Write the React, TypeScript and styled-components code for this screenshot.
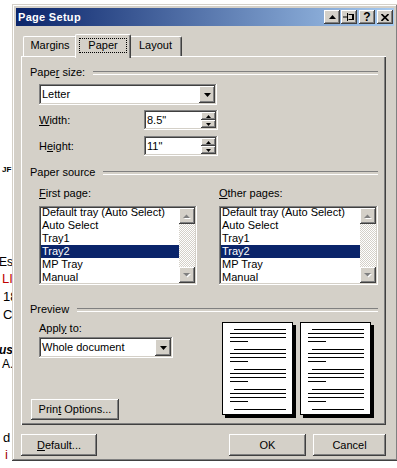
import styled, { createGlobalStyle } from "styled-components";

const GlobalStyle = createGlobalStyle`
  html, body {
    margin: 0;
    padding: 0;
    background: #fff;
  }
  body {
    font-family: "Liberation Sans", Arial, sans-serif;
    font-size: 11px;
    color: #000;
  }
  * {
    box-sizing: border-box;
  }
`;

const face = "#d4d0c8";
const raised = `box-shadow: inset -1px -1px #404040, inset 1px 1px #ffffff, inset -2px -2px #808080, inset 2px 2px ${face};`;
const sunken = `box-shadow: inset -1px -1px #ffffff, inset 1px 1px #808080, inset -2px -2px ${face}, inset 2px 2px #404040;`;

const Screen = styled.div`
  position: relative;
  width: 397px;
  height: 468px;
  overflow: hidden;
  background: #fff;
`;

/* strip of the document that peeks out left of the dialog */
const Doc = styled.div`
  width: 12px;
  overflow: hidden;
  display: flex;
  flex-direction: column;
`;

const DocLine = styled.div<{
  $gap: number;
  $left?: number;
  $size?: number;
  $color?: string;
  $bold?: boolean;
  $italic?: boolean;
}>`
  margin-top: ${(p) => p.$gap}px;
  margin-left: ${(p) => p.$left ?? 3}px;
  height: 14px;
  line-height: 14px;
  font-size: ${(p) => p.$size ?? 13}px;
  color: ${(p) => p.$color ?? "#000"};
  font-weight: ${(p) => (p.$bold ? "bold" : "normal")};
  font-style: ${(p) => (p.$italic ? "italic" : "normal")};
  white-space: nowrap;
`;

/* the dialog window floats over the document */
const Window = styled.div`
  position: absolute;
  left: 12px;
  top: 4px;
  width: 386px;
  height: 457px;
  padding: 4px;
  background: ${face};
  box-shadow: inset -1px -1px #404040, inset 1px 1px ${face}, inset -2px -2px #808080, inset 2px 2px #ffffff;
  display: flex;
  flex-direction: column;
`;

const TitleBar = styled.div`
  height: 18px;
  display: flex;
  align-items: center;
  padding: 0 1px 0 2px;
  background: linear-gradient(to right, #0a246a, #a6caf0);
  color: #fff;
`;

const TitleText = styled.span`
  flex: 1;
  font-weight: bold;
  font-size: 11px;
  letter-spacing: 0.3px;
`;

const CaptionButton = styled.div<{ $gap?: number }>`
  width: 16px;
  height: 14px;
  margin-left: ${(p) => p.$gap ?? 0}px;
  background: ${face};
  ${raised}
  display: flex;
  align-items: center;
  justify-content: center;
  color: #000;
  font-weight: bold;
  font-size: 12px;
  line-height: 14px;
`;

const Body = styled.div`
  flex: 1;
  display: flex;
  flex-direction: column;
  padding: 8px 8px 0 5px;
`;

const TabStrip = styled.div`
  display: flex;
  align-items: flex-end;
  height: 22px;
  padding-left: 2px;
`;

const Tab = styled.div<{ $active?: boolean; $w: number }>`
  position: relative;
  z-index: ${(p) => (p.$active ? 1 : 0)};
  width: ${(p) => p.$w + (p.$active ? 4 : 0)}px;
  height: ${(p) => (p.$active ? 24 : 20)}px;
  margin: ${(p) => (p.$active ? "0 -2px -2px" : "0")};
  padding-top: ${(p) => (p.$active ? 3 : 2)}px;
  background: ${face};
  border-top: 1px solid #fff;
  border-left: 1px solid #fff;
  border-right: 1px solid #404040;
  border-radius: 2px 2px 0 0;
  box-shadow: inset -1px 0 #808080;
  display: flex;
  justify-content: center;
  align-items: flex-start;
  line-height: 13px;
`;

const FocusLabel = styled.span`
  border: 1px dotted #000;
  padding: 0 8px;
  line-height: 13px;
`;

const TabPanel = styled.div`
  height: 369px;
  padding: 10px 8px 5px 9px;
  box-shadow: inset 1px 1px #fff, inset -1px -1px #404040, inset -2px -2px #808080;
  display: flex;
  flex-direction: column;
`;

const GroupHeader = styled.div<{ $mt?: number }>`
  margin-top: ${(p) => p.$mt ?? 0}px;
  height: 13px;
  line-height: 13px;
  display: flex;
  align-items: center;
  gap: 8px;

  &::after {
    content: "";
    flex: 1;
    height: 2px;
    border-top: 1px solid #808080;
    border-bottom: 1px solid #fff;
  }
`;

const Indent = styled.div<{ $mt?: number }>`
  margin-left: 9px;
  margin-top: ${(p) => p.$mt ?? 0}px;
`;

const Mn = styled.span`
  text-decoration: underline;
`;

const Combo = styled.div<{ $w: number }>`
  width: ${(p) => p.$w}px;
  height: 21px;
  padding: 2px;
  background: #fff;
  ${sunken}
  display: flex;
  align-items: center;
`;

const ComboText = styled.span`
  flex: 1;
  padding-left: 1px;
  line-height: 17px;
`;

const DropButton = styled.div`
  width: 16px;
  height: 17px;
  background: ${face};
  ${raised}
  display: flex;
  align-items: center;
  justify-content: center;
`;

const FieldRow = styled.div<{ $mt: number }>`
  margin-top: ${(p) => p.$mt}px;
  height: 20px;
  display: flex;
  align-items: center;
`;

const FieldLabel = styled.span`
  width: 105px;
  line-height: 13px;
`;

const Spin = styled.div`
  width: 74px;
  height: 20px;
  padding: 2px;
  background: #fff;
  ${sunken}
  display: flex;
`;

const SpinValue = styled.span`
  flex: 1;
  line-height: 16px;
  padding-left: 1px;
`;

const SpinButtons = styled.div`
  width: 15px;
  display: flex;
  flex-direction: column;
`;

const SpinButton = styled.div`
  flex: 1;
  background: ${face};
  ${raised}
  display: flex;
  align-items: center;
  justify-content: center;
`;

const SourceGrid = styled.div`
  margin-top: 8px;
  margin-left: 9px;
  display: grid;
  grid-template-columns: 180px 159px;
`;

const SourceColumn = styled.div`
  display: flex;
  flex-direction: column;
  gap: 6px;
  line-height: 13px;
`;

const ListBox = styled.div<{ $w: number }>`
  width: ${(p) => p.$w}px;
  height: 79px;
  padding: 2px;
  background: #fff;
  ${sunken}
  display: flex;
  overflow: hidden;
`;

const ListItems = styled.div`
  flex: 1;
  margin-top: -2px;
  overflow: hidden;
`;

const ListItem = styled.div<{ $selected?: boolean }>`
  height: 13px;
  line-height: 13px;
  padding-left: 1px;
  white-space: nowrap;
  background: ${(p) => (p.$selected ? "#0a246a" : "transparent")};
  color: ${(p) => (p.$selected ? "#fff" : "#000")};
`;

const ScrollBar = styled.div`
  width: 16px;
  display: flex;
  flex-direction: column;
  justify-content: space-between;
  background: repeating-conic-gradient(#ffffff 0 25%, ${face} 0 50%) 0 0 / 2px 2px;
`;

const ScrollButton = styled.div`
  width: 16px;
  height: 16px;
  background: ${face};
  ${raised}
  display: flex;
  align-items: center;
  justify-content: center;
`;

const PreviewRow = styled.div`
  margin-top: 6px;
  flex: 1;
  display: flex;
`;

const PreviewLeft = styled.div`
  flex: 1;
  display: flex;
  flex-direction: column;
`;

const ApplyLabel = styled.div`
  margin-left: 9px;
  line-height: 13px;
`;

const Button = styled.div<{ $w: number; $gap?: number }>`
  width: ${(p) => p.$w}px;
  height: 22px;
  margin-left: ${(p) => p.$gap ?? 0}px;
  background: ${face};
  ${raised}
  display: flex;
  align-items: center;
  justify-content: center;
  line-height: 13px;
`;

const PrintOptions = styled(Button)`
  margin-top: auto;
  margin-left: 1px;
  height: 21px;
`;

const Pages = styled.div`
  display: flex;
  gap: 7px;
  margin-right: 7px;
  align-self: flex-start;
`;

const Sheet = styled.div`
  width: 71px;
  height: 93px;
  background: #fff;
  border: 1px solid #000;
  box-shadow: 3px 3px 0 #000;

  svg {
    display: block;
  }
`;

const ButtonRow = styled.div`
  margin-top: 9px;
  display: flex;
  align-items: center;
`;

const Spacer = styled.div`
  flex: 1;
`;

const DownTri = () => (
  <svg width="7" height="4" viewBox="0 0 7 4">
    <path d="M0 0h7L3.5 4z" fill="#000" />
  </svg>
);

const SmallTri = ({ up }: { up?: boolean }) => (
  <svg width="5" height="3" viewBox="0 0 5 3">
    <path d={up ? "M0 3h5L2.5 0z" : "M0 0h5L2.5 3z"} fill="#000" />
  </svg>
);

const GrayTri = ({ up }: { up?: boolean }) => (
  <svg width="8" height="5" viewBox="0 0 8 5">
    <path d={up ? "M1 5h7L4.5 1.5z" : "M1 1h7L4.5 4.5z"} fill="#fff" />
    <path d={up ? "M0 4h7L3.5 0.5z" : "M0 0h7L3.5 3.5z"} fill="#808080" />
  </svg>
);

const PinIcon = () => (
  <svg width="12" height="10" viewBox="0 0 12 10">
    <path d="M0 5h4M4.5 1v8" stroke="#000" strokeWidth="1" fill="none" />
    <path d="M5.5 2.5h5v5h-5" stroke="#000" strokeWidth="1" fill="none" />
    <rect x="9" y="2" width="2" height="6" fill="#000" />
  </svg>
);

const CloseIcon = () => (
  <svg width="8" height="7" viewBox="0 0 8 7">
    <path d="M0.5 0l7 7M7.5 0l-7 7" stroke="#000" strokeWidth="1.6" fill="none" />
  </svg>
);

const PageLines = () => {
  const bars: { x: number; y: number; w: number }[] = [];
  for (let g = 0; g < 4; g++) {
    const y = 6 + g * 20;
    bars.push({ x: 11, y, w: 52 });
    bars.push({ x: 7, y: y + 4, w: 56 });
    bars.push({ x: 7, y: y + 8, w: 56 });
    bars.push({ x: 7, y: y + 12, w: 18 });
  }
  bars.push({ x: 11, y: 86, w: 52 });
  return (
    <svg width="69" height="91" viewBox="0 0 69 91">
      {bars.map((b, i) => (
        <rect key={i} x={b.x} y={b.y} width={b.w} height="1" fill="#000" />
      ))}
    </svg>
  );
};

const trays = ["Default tray (Auto Select)", "Auto Select", "Tray1", "Tray2", "MP Tray", "Manual"];

const TrayList = ({ w }: { w: number }) => (
  <ListBox $w={w}>
    <ListItems>
      {trays.map((t) => (
        <ListItem key={t} $selected={t === "Tray2"}>
          {t}
        </ListItem>
      ))}
    </ListItems>
    <ScrollBar>
      <ScrollButton>
        <GrayTri up />
      </ScrollButton>
      <ScrollButton>
        <GrayTri />
      </ScrollButton>
    </ScrollBar>
  </ListBox>
);

const SpinBox = ({ value }: { value: string }) => (
  <Spin>
    <SpinValue>{value}</SpinValue>
    <SpinButtons>
      <SpinButton>
        <SmallTri up />
      </SpinButton>
      <SpinButton>
        <SmallTri />
      </SpinButton>
    </SpinButtons>
  </Spin>
);

const App = () => {
  return (
    <Screen>
      <GlobalStyle />
      <Doc>
        <DocLine $gap={163} $size={8} $left={2} $bold>
          JF
        </DocLine>
        <DocLine $gap={78} $left={-1} $size={12}>
          Es
        </DocLine>
        <DocLine $gap={3} $size={13} $left={2} $color="#c00000">
          LI
        </DocLine>
        <DocLine $gap={4} $left={3}>
          18
        </DocLine>
        <DocLine $gap={4}>C</DocLine>
        <DocLine $gap={21} $left={-1} $size={12} $bold $italic>
          us
        </DocLine>
        <DocLine $gap={0} $left={2} $size={12}>
          A.
        </DocLine>
        <DocLine $gap={60}>d</DocLine>
        <DocLine $gap={3} $left={5} $color="#a00000">
          i
        </DocLine>
      </Doc>

      <Window>
        <TitleBar>
          <TitleText>Page Setup</TitleText>
          <CaptionButton>
            <svg width="7" height="4" viewBox="0 0 7 4">
              <path d="M0 4h7L3.5 0z" fill="#000" />
            </svg>
          </CaptionButton>
          <CaptionButton $gap={1}>
            <PinIcon />
          </CaptionButton>
          <CaptionButton $gap={2}>?</CaptionButton>
          <CaptionButton $gap={2}>
            <CloseIcon />
          </CaptionButton>
        </TitleBar>

        <Body>
          <TabStrip>
            <Tab $w={54}>Margins</Tab>
            <Tab $w={52} $active>
              <FocusLabel>Paper</FocusLabel>
            </Tab>
            <Tab $w={53}>Layout</Tab>
          </TabStrip>

          <TabPanel>
            <GroupHeader>
              <span>
                Pape<Mn>r</Mn> size:
              </span>
            </GroupHeader>
            <Indent $mt={5}>
              <Combo $w={178}>
                <ComboText>Letter</ComboText>
                <DropButton>
                  <DownTri />
                </DropButton>
              </Combo>
              <FieldRow $mt={5}>
                <FieldLabel>
                  <Mn>W</Mn>idth:
                </FieldLabel>
                <SpinBox value={'8.5"'} />
              </FieldRow>
              <FieldRow $mt={6}>
                <FieldLabel>
                  H<Mn>e</Mn>ight:
                </FieldLabel>
                <SpinBox value={'11"'} />
              </FieldRow>
            </Indent>

            <GroupHeader $mt={10}>
              <span>Paper source</span>
            </GroupHeader>
            <SourceGrid>
              <SourceColumn>
                <span>
                  <Mn>F</Mn>irst page:
                </span>
                <TrayList w={158} />
              </SourceColumn>
              <SourceColumn>
                <span>
                  <Mn>O</Mn>ther pages:
                </span>
                <TrayList w={159} />
              </SourceColumn>
            </SourceGrid>

            <GroupHeader $mt={18}>
              <span>Preview</span>
            </GroupHeader>
            <PreviewRow>
              <PreviewLeft>
                <ApplyLabel>
                  Appl<Mn>y</Mn> to:
                </ApplyLabel>
                <Indent $mt={2}>
                  <Combo $w={134}>
                    <ComboText>Whole document</ComboText>
                    <DropButton>
                      <DownTri />
                    </DropButton>
                  </Combo>
                </Indent>
                <PrintOptions $w={88}>
                  <span>
                    Prin<Mn>t</Mn> Options...
                  </span>
                </PrintOptions>
              </PreviewLeft>
              <Pages>
                <Sheet>
                  <PageLines />
                </Sheet>
                <Sheet>
                  <PageLines />
                </Sheet>
              </Pages>
            </PreviewRow>
          </TabPanel>

          <ButtonRow>
            <Button $w={76}>
              <span>
                <Mn>D</Mn>efault...
              </span>
            </Button>
            <Spacer />
            <Button $w={77}>OK</Button>
            <Button $w={73} $gap={7}>
              Cancel
            </Button>
          </ButtonRow>
        </Body>
      </Window>
    </Screen>
  );
};

export default App;
